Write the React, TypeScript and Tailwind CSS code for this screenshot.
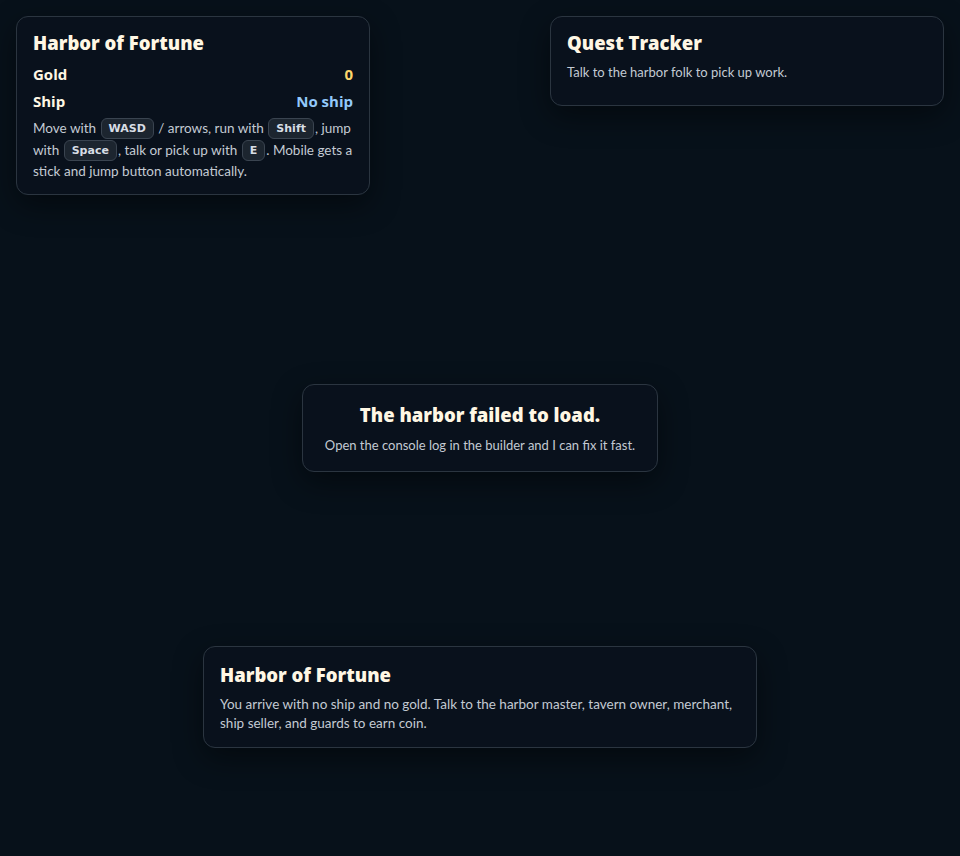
import React from 'react';

const Key: React.FC<{ children: React.ReactNode }> = ({ children }) => (
  <kbd className="mx-[1px] inline-block rounded-md border border-[#3a4450] bg-[#1c252f] px-[7px] py-[1px] align-[1px] font-['DejaVu_Sans',sans-serif] text-[11px] font-bold leading-[17px] text-[#d7dde4]">
    {children}
  </kbd>
);

const Panel: React.FC<{ className?: string; children: React.ReactNode }> = ({ className = '', children }) => (
  <div
    className={`absolute rounded-xl border border-[#2b3540] bg-[#0a121c]/95 shadow-[0_10px_30px_rgba(0,0,0,0.45)] ${className}`}
  >
    {children}
  </div>
);

const headingFont = "font-['Open_Sans',sans-serif] font-extrabold text-[#fff7e4]";

export default function App() {
  return (
    <div className="relative h-[856px] w-[960px] overflow-hidden bg-[#07111a] font-['Lato',sans-serif] text-[#c3cad3]">
      {/* hud: status */}
      <Panel className="left-4 top-4 w-[354px] px-4 pb-[11px] pt-[12px]">
        <h1 className={`${headingFont} text-[18.5px] leading-7`}>Harbor of Fortune</h1>
        <div className="mt-[6px] flex items-center justify-between font-['Open_Sans',sans-serif] text-[15px] font-bold leading-[22px]">
          <span className="text-[#fff7e4]">Gold</span>
          <span className="text-[#fcd66b]">0</span>
        </div>
        <div className="mt-[5px] flex items-center justify-between font-['Open_Sans',sans-serif] text-[15px] font-bold leading-[22px]">
          <span className="text-[#fff7e4]">Ship</span>
          <span className="text-[#93c9fb]">No ship</span>
        </div>
        <p className="mt-[6px] text-[13.5px] leading-[21.5px]">
          Move with <Key>WASD</Key> / arrows, run with <Key>Shift</Key>, jump with <Key>Space</Key>, talk or pick up
          with <Key>E</Key>. Mobile gets a stick and jump button automatically.
        </p>
      </Panel>

      {/* hud: quests */}
      <Panel className="right-4 top-4 w-[394px] px-4 pb-[23px] pt-[12px]">
        <h2 className={`${headingFont} text-[18.5px] leading-7`}>Quest Tracker</h2>
        <p className="mt-[5px] text-[13px] leading-5">Talk to the harbor folk to pick up work.</p>
      </Panel>

      {/* load error */}
      <Panel className="left-[302px] top-[384px] w-[356px] px-4 pb-[16px] pt-[16px] text-center">
        <h2 className={`${headingFont} text-[18.5px] leading-7`}>The harbor failed to load.</h2>
        <p className="mt-[6px] text-[13px] leading-5">Open the console log in the builder and I can fix it fast.</p>
      </Panel>

      {/* intro */}
      <Panel className="left-[203px] top-[646px] w-[554px] px-4 pb-[14px] pt-[14px]">
        <h2 className={`${headingFont} text-[18.5px] leading-7`}>Harbor of Fortune</h2>
        <p className="mt-[6px] text-[13.5px] leading-[19px]">
          You arrive with no ship and no gold. Talk to the harbor master, tavern owner, merchant, ship seller, and guards
          to earn coin.
        </p>
      </Panel>
    </div>
  );
}
